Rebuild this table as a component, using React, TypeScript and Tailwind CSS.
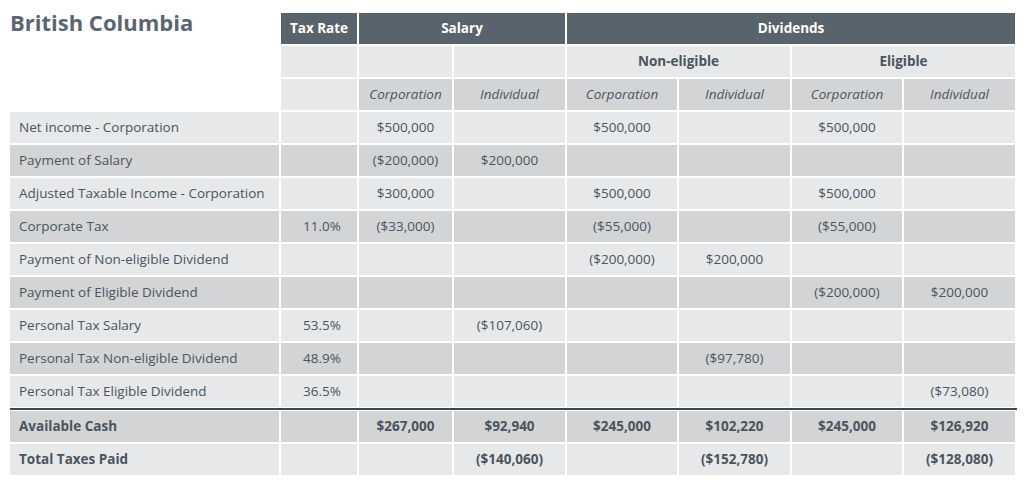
import React from 'react'

const light = 'bg-[#e6e8ea]'
const dark = 'bg-[#d2d4d6]'

type Row = { label: string; rate?: string; vals: string[]; shade: string; bold?: boolean }

const rows: Row[] = [
  { label: 'Net income - Corporation', vals: ['$500,000', '', '$500,000', '', '$500,000', ''], shade: light },
  { label: 'Payment of Salary', vals: ['($200,000)', '$200,000', '', '', '', ''], shade: dark },
  { label: 'Adjusted Taxable Income - Corporation', vals: ['$300,000', '', '$500,000', '', '$500,000', ''], shade: light },
  { label: 'Corporate Tax', rate: '11.0%', vals: ['($33,000)', '', '($55,000)', '', '($55,000)', ''], shade: dark },
  { label: 'Payment of Non-eligible Dividend', vals: ['', '', '($200,000)', '$200,000', '', ''], shade: light },
  { label: 'Payment of Eligible Dividend', vals: ['', '', '', '', '($200,000)', '$200,000'], shade: dark },
  { label: 'Personal Tax Salary', rate: '53.5%', vals: ['', '($107,060)', '', '', '', ''], shade: light },
  { label: 'Personal Tax Non-eligible Dividend', rate: '48.9%', vals: ['', '', '', '($97,780)', '', ''], shade: dark },
  { label: 'Personal Tax Eligible Dividend', rate: '36.5%', vals: ['', '', '', '', '', '($73,080)'], shade: light },
]

const totals: Row[] = [
  { label: 'Available Cash', vals: ['$267,000', '$92,940', '$245,000', '$102,220', '$245,000', '$126,920'], shade: dark, bold: true },
  { label: 'Total Taxes Paid', vals: ['', '($140,060)', '', '($152,780)', '', '($128,080)'], shade: light, bold: true },
]

function BodyRow({ row }: { row: Row }) {
  const weight = row.bold ? 'font-bold' : 'font-normal'
  return (
    <>
      <div className={`${row.shade} ${weight} flex h-[31px] items-center pl-[9px]`}>{row.label}</div>
      <div className={`${row.shade} ${weight} flex h-[31px] items-center justify-center pl-[6px]`}>{row.rate}</div>
      {row.vals.map((v, i) => (
        <div key={i} className={`${row.shade} ${weight} flex h-[31px] items-center justify-center`}>{v}</div>
      ))}
    </>
  )
}

export default function App() {
  return (
    <div className="h-[483px] w-[1024px] bg-white pl-[10px] pt-[13px] text-[13.5px] text-[#4b545d]" style={{ fontFamily: '"Open Sans", "Liberation Sans", sans-serif' }}>
      <div className="grid grid-cols-[269px_76px_93px_111px_110px_111px_110px_111px] gap-[2px]">
        {/* header */}
        <div className="row-span-3 -mt-[6px] text-[22px] font-bold leading-[30px] text-[#5b6670]">British Columbia</div>
        <div className="flex h-[31px] items-center justify-center bg-[#59636b] font-bold text-white">Tax Rate</div>
        <div className="col-span-2 flex h-[31px] items-center justify-center bg-[#59636b] font-bold text-white">Salary</div>
        <div className="col-span-4 flex h-[31px] items-center justify-center bg-[#59636b] font-bold text-white">Dividends</div>

        <div className={`${light} h-[31px]`} />
        <div className={`${light} h-[31px]`} />
        <div className={`${light} h-[31px]`} />
        <div className={`${light} col-span-2 flex h-[31px] items-center justify-center font-bold`}>Non-eligible</div>
        <div className={`${light} col-span-2 flex h-[31px] items-center justify-center font-bold`}>Eligible</div>

        <div className={`${light} h-[31px]`} />
        {['Corporation', 'Individual', 'Corporation', 'Individual', 'Corporation', 'Individual'].map((t, i) => (
          <div key={i} className={`${dark} flex h-[31px] items-center justify-center italic`}>{t}</div>
        ))}

        {rows.map((r) => (
          <BodyRow key={r.label} row={r} />
        ))}

        <div className="col-span-8 -mb-[2px] -mr-[2px] -mt-[1px] h-[2px] bg-[#3f474e]" />

        {totals.map((r) => (
          <BodyRow key={r.label} row={r} />
        ))}
      </div>
    </div>
  )
}
